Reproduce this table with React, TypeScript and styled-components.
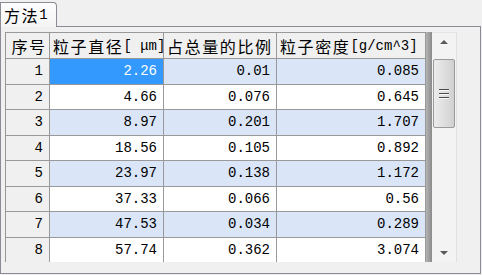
import styled, { createGlobalStyle, css } from "styled-components";

const GlobalStyle = createGlobalStyle`
  html, body {
    margin: 0;
    padding: 0;
    background: #f0f0f0;
  }
`;

type Row = [number, string, string, string];

const HEADERS = ["序号", "粒子直径[ μm]", "占总量的比例", "粒子密度[g/cm^3]"];

const ROWS: Row[] = [
  [1, "2.26", "0.01", "0.085"],
  [2, "4.66", "0.076", "0.645"],
  [3, "8.97", "0.201", "1.707"],
  [4, "18.56", "0.105", "0.892"],
  [5, "23.97", "0.138", "1.172"],
  [6, "37.33", "0.066", "0.56"],
  [7, "47.53", "0.034", "0.289"],
  [8, "57.74", "0.362", "3.074"],
];

// splits a header into CJK and ascii runs so each gets its own font size
const renderLabel = (text: string) =>
  text.split(/([\u4e00-\u9fff]+)/).filter(Boolean).map((part, i) =>
    /[\u4e00-\u9fff]/.test(part) ? <Han key={i}>{part}</Han> : <span key={i}>{part}</span>
  );

const App = () => {
  return (
    <Page>
      <GlobalStyle />
      <TabStrip>
        <Tab>{renderLabel("方法1")}</Tab>
      </TabStrip>
      <Panel>
        <GridBox>
          <Table>
            {HEADERS.map((h, i) => (
              <Cell key={h} $kind="head" $center={i === 0}>{renderLabel(h)}</Cell>
            ))}
            {ROWS.map((row, r) => (
              <>
                <Cell key={`h${r}`} $kind="rowhead">{row[0]}</Cell>
                {row.slice(1).map((v, c) => (
                  <Cell
                    key={`${r}-${c}`}
                    $kind="data"
                    $alt={r % 2 === 0}
                    $selected={r === 0 && c === 0}
                  >
                    {v}
                  </Cell>
                ))}
              </>
            ))}
          </Table>
          <Splitter />
          <ScrollBar>
            <ArrowButton><Arrow $up /></ArrowButton>
            <Track>
              <Thumb>
                <Grip />
                <Grip />
                <Grip />
              </Thumb>
            </Track>
            <ArrowButton><Arrow /></ArrowButton>
          </ScrollBar>
        </GridBox>
      </Panel>
    </Page>
  );
};

export default App;

const Page = styled.div`
  width: 482px;
  height: 275px;
  background: #f0f0f0;
  font-family: "Liberation Mono", "Noto Sans CJK SC", monospace;
  font-size: 14px;
  color: #000;
  overflow: hidden;
`;

const TabStrip = styled.div`
  display: flex;
  padding-top: 2px;
  height: 24px;
  position: relative;
  z-index: 1;
`;

const Tab = styled.div`
  width: 57px;
  height: 25px;
  box-sizing: border-box;
  border: 1px solid #898c95;
  border-bottom: none;
  border-radius: 0 4px 0 0;
  background: linear-gradient(#fdfdfd, #f4f4f4);
  display: flex;
  align-items: center;
  padding-left: 3px;
  line-height: 1;
`;

const Han = styled.span`
  font-family: "Noto Sans CJK SC", sans-serif;
  font-size: 16px;
  letter-spacing: 1.6px;
`;

const Panel = styled.div`
  width: 481px;
  height: 248px;
  box-sizing: border-box;
  border: 1px solid #898c95;
  padding: 5px 0 0 4px;
  background: #f0f0f0;
`;

const GridBox = styled.div`
  display: flex;
  width: 452px;
  height: 230px;
  overflow: hidden;
`;

const Table = styled.div`
  display: grid;
  grid-template-columns: 44px 114px 113px 149px;
  grid-template-rows: 26px repeat(8, 25.5px);
  border-left: 1px solid #999;
  border-top: 1px solid #999;
  align-self: flex-start;
  background: #fff;
`;

type CellProps = {
  $kind: "head" | "rowhead" | "data";
  $alt?: boolean;
  $selected?: boolean;
  $center?: boolean;
};

const Cell = styled.div<CellProps>`
  box-sizing: border-box;
  border-right: 1px solid #999;
  border-bottom: 1px solid #999;
  display: flex;
  align-items: center;
  white-space: nowrap;
  overflow: hidden;
  ${({ $kind, $center }) =>
    $kind === "head"
      ? css`
          background: #f0f0f0;
          padding-left: 3px;
          justify-content: ${$center ? "center" : "flex-start"};
        `
      : $kind === "rowhead"
      ? css`
          background: #f0f0f0;
          justify-content: flex-end;
          padding-right: 6px;
        `
      : css`
          justify-content: flex-end;
          padding-right: 6px;
        `}
  ${({ $alt }) => $alt && css`background: #dae6f8;`}
  ${({ $selected }) => $selected && css`background: #3399ff; color: #fff;`}
`;

const Splitter = styled.div`
  width: 6px;
  flex-shrink: 0;
  background: linear-gradient(to right, #b4b4b4, #8a8a8a);
`;

const ScrollBar = styled.div`
  width: 25px;
  box-sizing: border-box;
  display: flex;
  flex-direction: column;
  background: #f3f3f3;
  border-top: 1px solid #e3e3e3;
  border-right: 1px solid #e0e0e0;
  padding: 0 1px;
`;

const ArrowButton = styled.div`
  height: 18px;
  display: flex;
  align-items: center;
  justify-content: center;
  flex-shrink: 0;
`;

const Arrow = styled.div<{ $up?: boolean }>`
  width: 0;
  height: 0;
  border-left: 4px solid transparent;
  border-right: 4px solid transparent;
  ${({ $up }) =>
    $up
      ? css`border-bottom: 4px solid #5a5a5a;`
      : css`border-top: 4px solid #5a5a5a;`}
`;

const Track = styled.div`
  flex: 1;
  padding-top: 8px;
`;

const Thumb = styled.div`
  height: 69px;
  box-sizing: border-box;
  border: 1px solid #9a9a9a;
  border-radius: 2px;
  background: linear-gradient(to right, #ececec, #dcdcdc 60%, #d0d0d0);
  display: flex;
  flex-direction: column;
  align-items: center;
  justify-content: center;
  gap: 2px;
`;

const Grip = styled.div`
  width: 10px;
  height: 1px;
  background: #4a4a4a;
  border-bottom: 1px solid #f8f8f8;
`;
